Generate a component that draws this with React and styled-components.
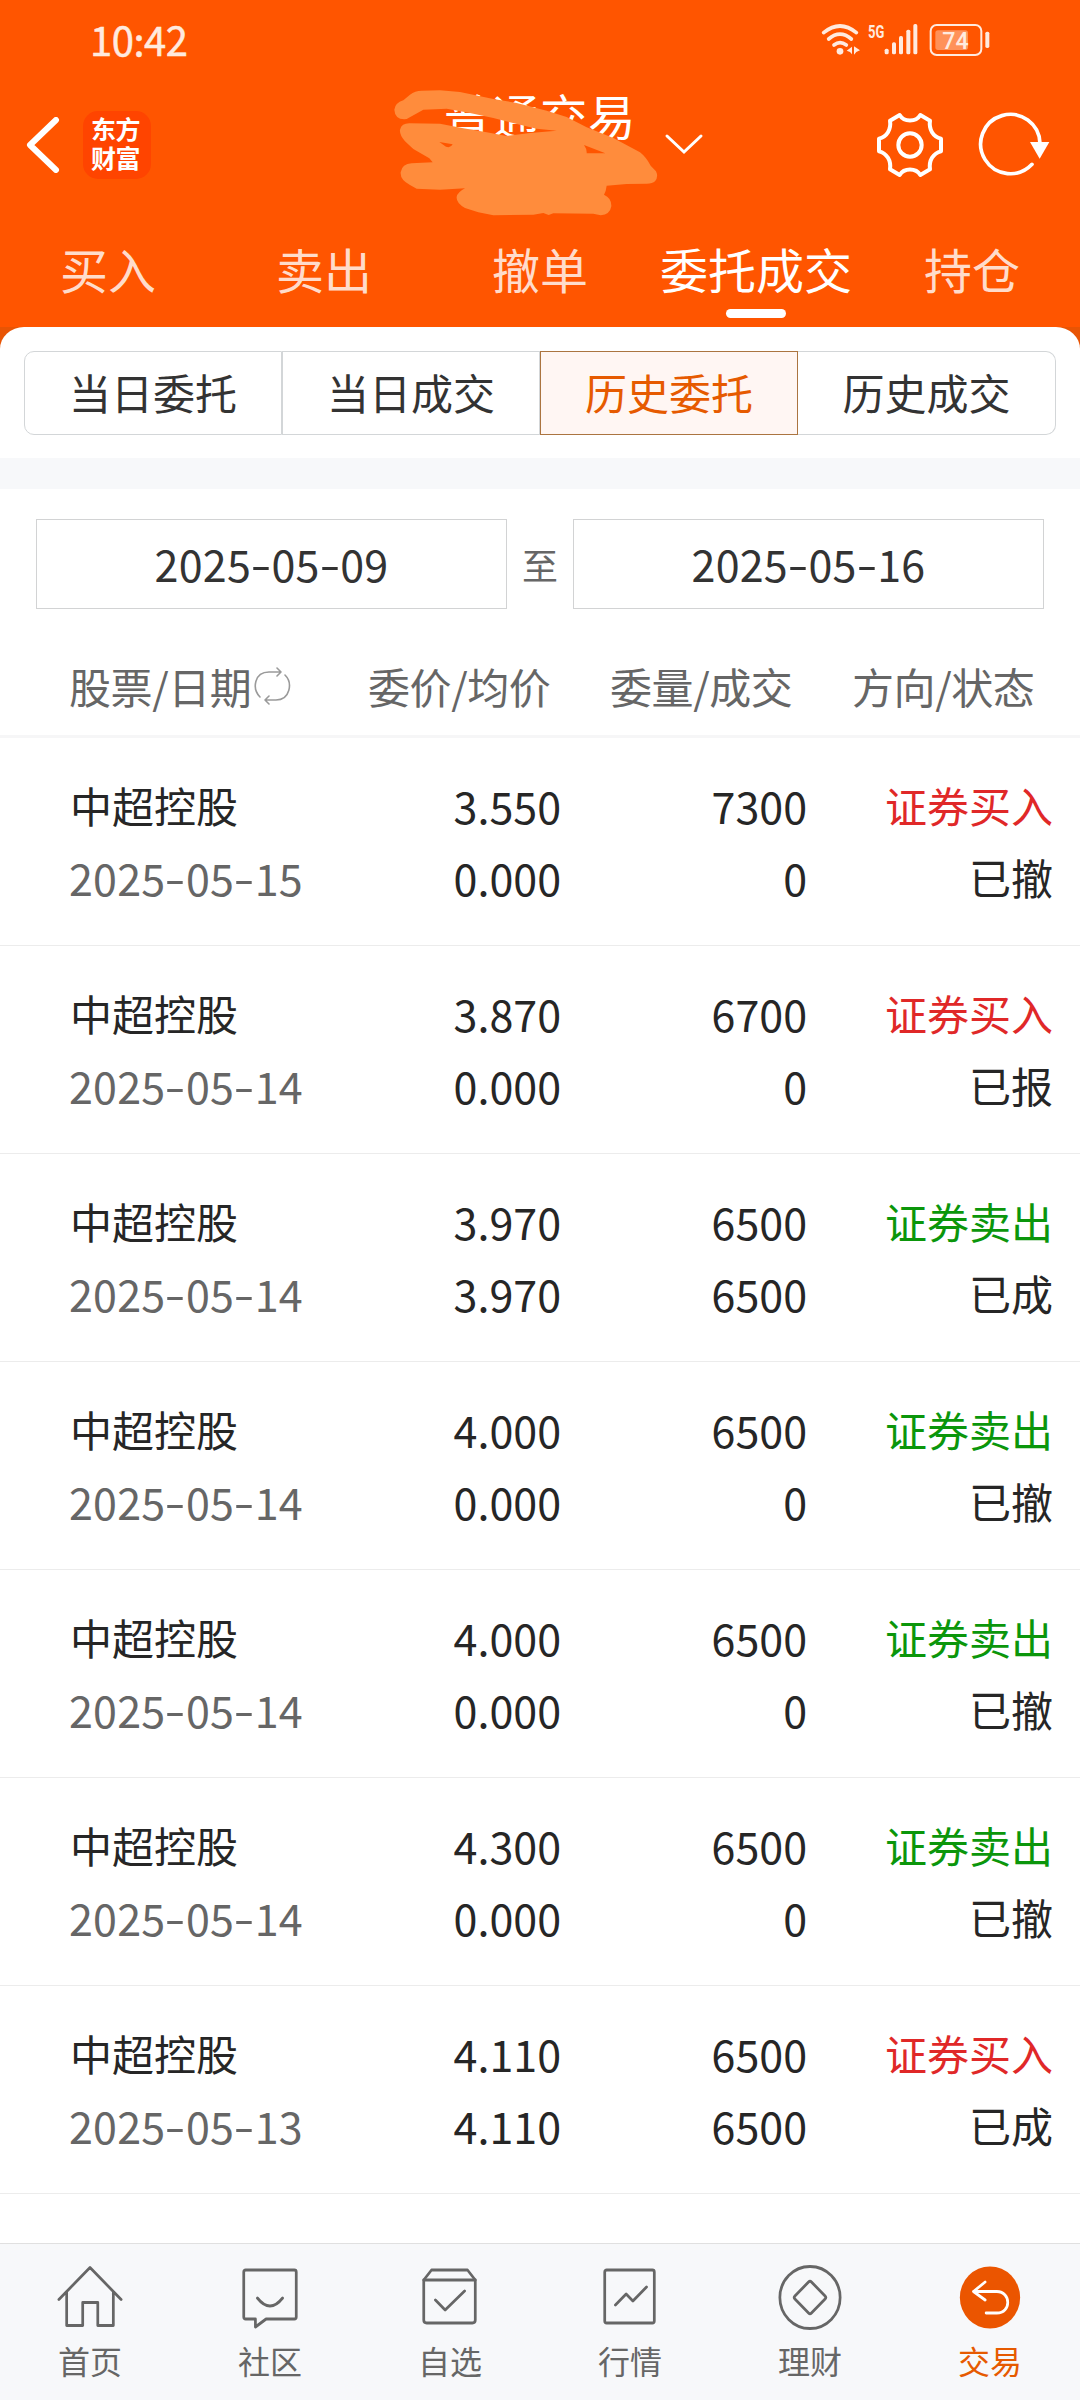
import React from 'react';
import styled, { createGlobalStyle } from 'styled-components'

const GlobalStyle = createGlobalStyle`
  body {
    margin: 0;
    background: #FFFFFF;
    font-family: 'Noto Sans CJK SC', sans-serif;
  }
  * {
    box-sizing: border-box;
  }
`

const Page = styled.div`
  width: 1080px;
  height: 2400px;
  display: flex;
  flex-direction: column;
  overflow: hidden;
  background: #FFFFFF;
`

const Header = styled.header`
  height: 327px;
  background: #FF5500;
  display: flex;
  flex-direction: column;
`

const StatusBar = styled.div`
  height: 80px;
  display: flex;
  justify-content: space-between;
  padding: 22px 88px 0 90px;
`

const Clock = styled.span`
  color: #FFEADF;
  font-size: 40px;
  line-height: 34px;
  letter-spacing: -0.5px;
  -webkit-text-stroke: 0.5px #FFEADF;
`

const TitleBar = styled.div`
  height: 130px;
  display: flex;
  align-items: center;
  padding: 0 30px 0 26px;
`

const Side = styled.div`
  width: 250px;
  display: flex;
  align-items: center;
  gap: ${props => props.$gap}px;
  justify-content: ${props => props.$end ? 'flex-end' : 'flex-start'};
`

const Logo = styled.div`
  width: 68px;
  height: 68px;
  border-radius: 15px;
  background: #FF4400;
  color: #FFFFFF;
  font-size: 25px;
  font-weight: 700;
  line-height: 29px;
  letter-spacing: -0.5px;
  padding: 3px 8px 0;
`

const Account = styled.div`
  flex: 1;
  height: 130px;
  position: relative;
  display: flex;
  justify-content: center;
`

const AccountName = styled.span`
  color: #FFFFFF;
  font-size: 47.5px;
  line-height: 60px;
  letter-spacing: 0.5px;
  margin-top: 5px;
  margin-left: 4px;
`

const Scribble = styled.svg`
  position: absolute;
  left: 114px;
  top: 8px;
`

const Chevron = styled.svg`
  position: absolute;
  left: 386px;
  top: 50px;
`

const MainTabs = styled.nav`
  flex: 1;
  display: flex;
`

const MainTab = styled.div`
  flex: 1;
  display: flex;
  flex-direction: column;
  align-items: center;
  white-space: nowrap;
  font-size: 48px;
  line-height: 70px;
  padding-top: 23px;
  color: ${props => props.$active ? '#FFFFFF' : '#FFDCCB'};
  &::after {
    content: '';
    width: 60px;
    height: 9px;
    margin-top: 6px;
    border-radius: 5px;
    background: ${props => props.$active ? '#FFFFFF' : 'transparent'};
  }
`

const SheetEdge = styled.div`
  background: #E85404;
`

const Sheet = styled.div`
  height: 131px;
  padding: 24px 24px 0;
  background: #FFFFFF;
  border-radius: 24px 24px 0 0 / 22px 22px 0 0;
`

const Segments = styled.div`
  height: 84px;
  display: grid;
  grid-template-columns: repeat(4, 1fr);
`

const Segment = styled.div`
  display: flex;
  align-items: center;
  justify-content: center;
  padding-bottom: 2px;
  font-size: 42px;
  line-height: 60px;
  color: ${props => props.$active ? '#E65A00' : '#333333'};
  background: ${props => props.$active ? '#FFF6F3' : '#FFFFFF'};
  border: 1px solid ${props => props.$active ? '#AB7440' : '#D3D6D8'};
  &:first-child {
    border-radius: 10px 0 0 10px;
  }
  &:last-child {
    border-radius: 0 10px 10px 0;
    border-left: none;
  }
`

const Band = styled.div`
  height: 31px;
  background: #F7F8FA;
`

const DateRange = styled.div`
  display: flex;
  align-items: center;
  justify-content: space-between;
  padding: 30px 36px 0;
`

const DateBox = styled.div`
  width: 471px;
  height: 90px;
  border: 1px solid #D2D3D4;
  display: flex;
  align-items: center;
  justify-content: center;
  padding-bottom: 3px;
  font-size: 43px;
  letter-spacing: 0.25px;
  color: #333333;
`

const To = styled.span`
  font-size: 36px;
  line-height: 40px;
  color: #666666;
  margin-top: 0;
`

const Dash = styled.span`
  display: inline-block;
  width: 20.5px;
  text-align: center;
  transform: translateY(-1.5px) scaleX(1.4);
`

const TableHead = styled.div`
  height: 129px;
  display: grid;
  grid-template-columns: 299px 242px 242px auto;
  align-items: center;
  padding: 27px 0 0 69px;
  border-bottom: 3px solid #F6F6F7;
  font-size: 42px;
  line-height: 60px;
  letter-spacing: -0.4px;
  color: #666666;
`

const HeadCell = styled.div`
  display: flex;
  align-items: center;
  white-space: nowrap;
  svg {
    margin-left: 3px;
  }
`

const Row = styled.div`
  height: 208px;
  display: grid;
  grid-template-columns: 1fr 246px 246px 246px;
  grid-template-rows: 72px 72px;
  padding: 31px 27px 0 69px;
  border-bottom: 1px solid #ECECEC;
`

const Text = styled.div`
  font-size: 42px;
  line-height: 72px;
  white-space: nowrap;
  text-align: ${props => props.$left ? 'left' : 'right'};
  color: ${props => props.$color || '#262626'};
`

const Name = styled(Text)`
  padding-left: 1px;
`

const Figure = styled(Text)`
  font-size: 43px;
  letter-spacing: ${props => props.$left ? 0.25 : 0}px;
`

const Spacer = styled.div`
  flex: 1;
`

const BottomNav = styled.nav`
  height: 157px;
  display: flex;
  background: #F7F8FA;
  border-top: 1px solid #E0E0E0;
`

const NavItem = styled.div`
  flex: 1;
  display: flex;
  flex-direction: column;
  align-items: center;
  padding-top: 19px;
  font-size: 32px;
  line-height: 40px;
  color: ${props => props.$active ? '#E65A00' : '#666666'};
  svg {
    display: block;
    margin-bottom: 9px;
  }
`

const mainTabs = ['买入', '卖出', '撤单', '委托成交', '持仓']
const segments = ['当日委托', '当日成交', '历史委托', '历史成交']

const orders = [
  { date: '2025-05-15', price: '3.550', avg: '0.000', amount: '7300', done: '0', side: '证券买入', status: '已撤' },
  { date: '2025-05-14', price: '3.870', avg: '0.000', amount: '6700', done: '0', side: '证券买入', status: '已报' },
  { date: '2025-05-14', price: '3.970', avg: '3.970', amount: '6500', done: '6500', side: '证券卖出', status: '已成' },
  { date: '2025-05-14', price: '4.000', avg: '0.000', amount: '6500', done: '0', side: '证券卖出', status: '已撤' },
  { date: '2025-05-14', price: '4.000', avg: '0.000', amount: '6500', done: '0', side: '证券卖出', status: '已撤' },
  { date: '2025-05-14', price: '4.300', avg: '0.000', amount: '6500', done: '0', side: '证券卖出', status: '已撤' },
  { date: '2025-05-13', price: '4.110', avg: '4.110', amount: '6500', done: '6500', side: '证券买入', status: '已成' },
]

const DateText = ({ value }) => {
  const [year, month, day] = value.split('-')
  return (
    <span>{year}<Dash>-</Dash>{month}<Dash>-</Dash>{day}</span>
  )
}

const StatusIcons = () => (
  <svg width="172" height="35" viewBox="300 65 516 105" fill="none" stroke="#FFEADF" strokeLinecap="round">
    <g strokeWidth="11">
      <path d="M311 97Q360 57 409 97" />
      <path d="M326 116Q360 87 394 116" />
      <path d="M342 134Q360 120 379 134" />
    </g>
    <g fill="#FFEADF" stroke="none">
      <circle cx="360" cy="153" r="10" />
      <path d="M380 151L396 139V162L390 155ZM402 138L420 150L409 155L402 163Z" />
      <text x="444" y="112" fontFamily="Roboto" fontWeight="700" fontSize="55" textLength="49" lengthAdjust="spacingAndGlyphs">5G</text>
      <rect x="494" y="145" width="12" height="17" rx="5" />
      <rect x="516" y="126" width="12" height="36" rx="5" />
      <rect x="537" y="107" width="12" height="55" rx="5" />
      <rect x="559" y="88" width="12" height="74" rx="5" />
      <rect x="580" y="71" width="12" height="91" rx="5" />
      <rect x="646" y="90" width="98" height="59" rx="8" opacity="0.4" />
      <rect x="796" y="94" width="12" height="49" rx="5" />
      <text x="667" y="147" fontFamily="Roboto" fontWeight="500" fontSize="73" textLength="79" lengthAdjust="spacingAndGlyphs">74</text>
    </g>
    <rect x="632" y="74" width="152" height="90" rx="18" strokeWidth="6" />
  </svg>
)

const BackIcon = () => (
  <svg width="34" height="56" viewBox="0 0 34 56" fill="none" stroke="#FFFFFF" strokeWidth="6" strokeLinecap="round" strokeLinejoin="round">
    <path d="M30 3L4 28L30 53" />
  </svg>
)

const GearIcon = () => (
  <svg width="68" height="68" viewBox="470 333 204 204" fill="none" stroke="#FFFFFF" strokeWidth="12" strokeLinejoin="round">
    <path d="M603 345L632 362C628 388 641 410 665 416V454C641 460 628 482 632 508L603 525C590 503 554 503 541 525L512 508C516 482 503 460 479 454V416C503 410 516 388 512 362L541 345C554 367 590 367 603 345Z" />
    <circle cx="572" cy="435" r="35" />
  </svg>
)

const ReloadIcon = () => (
  <svg width="72" height="68" viewBox="776 333 216 204" fill="none" stroke="#FFFFFF" strokeWidth="11" strokeLinecap="round">
    <path d="M938 493A89 89 0 1 1 962 430" />
    <path d="M932 426H990L961 476Z" fill="#FFFFFF" stroke="none" />
  </svg>
)

const SwapIcon = () => (
  <svg width="37" height="38" viewBox="0 0 37 38" fill="none" stroke="#9A9A9A" strokeWidth="1.6" strokeLinecap="round" strokeLinejoin="round">
    <path d="M6 30C-2 22 0 5 15 5H27M23 1L27 5L23 9" />
    <path d="M31 8C39 16 36 33 22 33H11M15 29L11 33L15 37" />
  </svg>
)

const navIcons = {
  home: <path d="M4 36L36 4L68 36M12 29V62H28.500V39H44V62H60V29" transform="translate(0 0.500)" />,
  club: <>
    <path d="M11 7H61Q63 7 63 9V54Q63 56 61 56H32L21 64V56H11Q9 56 9 54V9Q9 7 11 7Z" />
    <path d="M23 35Q36 51 49 35" />
  </>,
  pick: <>
    <path d="M9 17V57Q9 60 12 60H59Q62 60 62 57V17L54 7H17Z" />
    <path d="M9 17H62M21 37L31 47L51 28" />
  </>,
  market: <>
    <rect x="10" y="7" width="51" height="53" rx="2" />
    <path d="M21 42L32 31L39 38L53 24" />
  </>,
  wealth: <>
    <circle cx="36" cy="34.500" r="31" />
    <path d="M34.500 19Q36 17.500 37.500 19L51.500 33Q53 34.500 51.500 36L37.500 50Q36 51.500 34.500 50L20.500 36Q19 34.500 20.500 33Z" />
  </>,
  trade: <>
    <circle cx="36" cy="34.500" r="31" fill="#EB5500" stroke="none" />
    <path d="M31 19L19 28.500L31 37M19 28.500H43C58 29 58 50 43 50H32" stroke="#FFFFFF" />
  </>,
}

const navItems = [
  ['home', '首页'],
  ['club', '社区'],
  ['pick', '自选'],
  ['market', '行情'],
  ['wealth', '理财'],
  ['trade', '交易'],
]

const Order = ({ date, price, avg, amount, done, side, status }) => (
  <Row>
    <Name $left>中超控股</Name>
    <Figure>{price}</Figure>
    <Figure>{amount}</Figure>
    <Text $color={side === '证券买入' ? '#E02828' : '#0B960B'}>{side}</Text>
    <Figure $left $color="#666666"><DateText value={date} /></Figure>
    <Figure>{avg}</Figure>
    <Figure>{done}</Figure>
    <Text>{status}</Text>
  </Row>
)

const App = () => {
  return (
    <Page>
      <GlobalStyle />
      <Header>
        <StatusBar>
          <Clock>10:42</Clock>
          <StatusIcons />
        </StatusBar>
        <TitleBar>
          <Side $gap={23}>
            <BackIcon />
            <Logo>东方财富</Logo>
          </Side>
          <Account>
            <AccountName>普通交易</AccountName>
            <Scribble width="270" height="129" viewBox="90 85 810 387">
              <path
                fill="#FF8C3C"
                fillRule="evenodd"
                d="M103 150Q105 130 130 122L150 105Q165 93 185 93L240 92L300 97L400 118L470 130L560 153L620 172L680 203L760 235L840 278Q858 292 872 318L888 335Q896 352 885 365Q878 372 860 372L800 373L740 378Q738 395 732 405Q755 415 754 440Q750 465 722 467L700 462L580 461L566 466L550 460L520 465L400 467L355 458L315 445Q288 430 290 412Q292 398 315 386L240 390L170 387L150 376Q120 360 122 338Q126 312 155 311L218 308L208 296L160 268L135 245Q118 225 120 210Q125 190 150 191L240 192L310 206L380 218L440 229L510 220L590 213L530 207L480 195L400 175L330 160L260 147L190 150L140 178Q105 182 103 150ZM238 247L278 254Q272 266 258 261ZM672 256L736 281L680 281Q681 268 672 256Z"
              />
            </Scribble>
            <Chevron width="44" height="28" viewBox="0 0 44 28" fill="none" stroke="#FFFFFF" strokeWidth="3" strokeLinecap="round">
              <path d="M5 6L22 22L39 6" />
            </Chevron>
          </Account>
          <Side $end $gap={34}>
            <GearIcon />
            <ReloadIcon />
          </Side>
        </TitleBar>
        <MainTabs>
          {mainTabs.map(tab => <MainTab key={tab} $active={tab === '委托成交'}>{tab}</MainTab>)}
        </MainTabs>
      </Header>
      <SheetEdge>
        <Sheet>
          <Segments>
            {segments.map(name => <Segment key={name} $active={name === '历史委托'}>{name}</Segment>)}
          </Segments>
        </Sheet>
      </SheetEdge>
      <Band />
      <DateRange>
        <DateBox><DateText value="2025-05-09" /></DateBox>
        <To>至</To>
        <DateBox><DateText value="2025-05-16" /></DateBox>
      </DateRange>
      <TableHead>
        <HeadCell>股票/日期<SwapIcon /></HeadCell>
        <HeadCell>委价/均价</HeadCell>
        <HeadCell>委量/成交</HeadCell>
        <HeadCell>方向/状态</HeadCell>
      </TableHead>
      {orders.map((order, i) => <Order key={i} {...order} />)}
      <Spacer />
      <BottomNav>
        {navItems.map(([icon, label]) => (
          <NavItem key={icon} $active={icon === 'trade'}>
            <svg width="70" height="68" viewBox="0 0 72 68" preserveAspectRatio="none" fill="none" stroke="#666666" strokeWidth="2.8" strokeLinecap="round" strokeLinejoin="round">
              {navIcons[icon]}
            </svg>
            {label}
          </NavItem>
        ))}
      </BottomNav>
    </Page>
  )
}

export default App;
